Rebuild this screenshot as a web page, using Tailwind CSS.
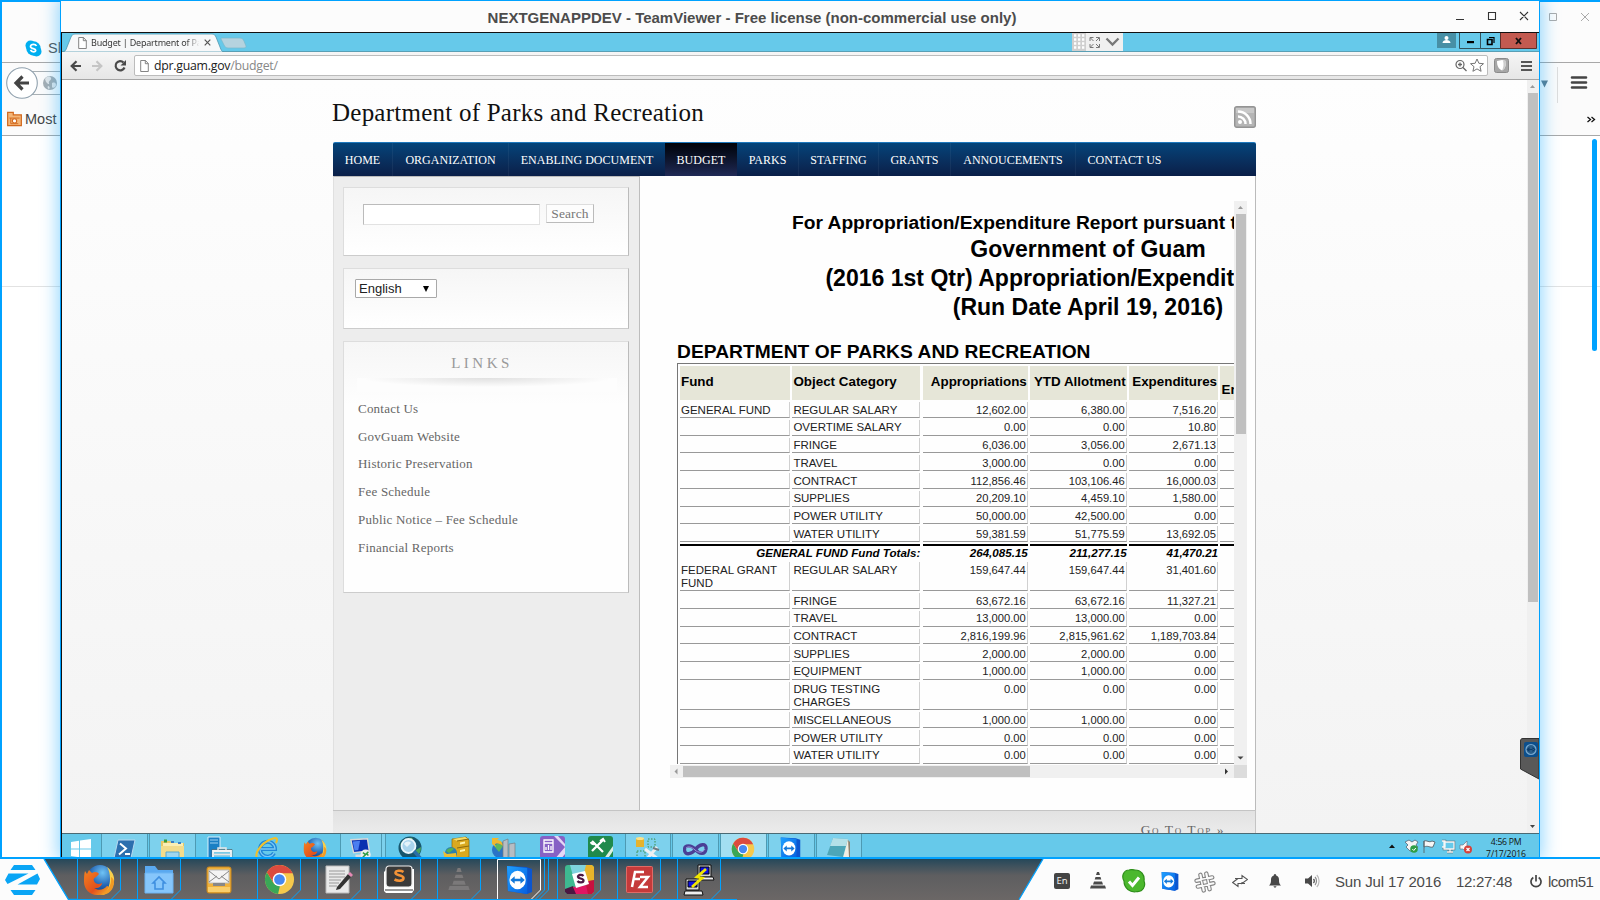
<!DOCTYPE html>
<html lang="en">
<head>
<meta charset="utf-8">
<title>Budget | Department of Parks and Recreation</title>
<script src="https://cdn.jsdelivr.net/npm/@tailwindcss/browser@4"></script>
</head>
<body class="w-[1600px] h-[900px] overflow-hidden font-['Liberation_Sans',sans-serif]">
<svg width="0" height="0" class="absolute">
  <defs>
    <linearGradient id="gBlue" x1="0" y1="0" x2="1" y2="1"><stop offset="0" stop-color="#1fa0ff"/><stop offset="1" stop-color="#0560e0"/></linearGradient>
    <radialGradient id="gGlobe" cx=".6" cy=".3" r=".8"><stop offset="0" stop-color="#6fc3f5"/><stop offset=".6" stop-color="#2667b5"/><stop offset="1" stop-color="#123a7c"/></radialGradient>
    <linearGradient id="gFox" x1="0" y1="0" x2="1" y2="1"><stop offset="0" stop-color="#f58220"/><stop offset=".6" stop-color="#e2501c"/><stop offset="1" stop-color="#f8b62b"/></linearGradient>
    <symbol id="firefox" viewBox="0 0 32 32">
      <circle cx="17" cy="14" r="13" fill="url(#gGlobe)"/>
      <path d="M24 3c5 4 8 9 7 15-1 7-6 12-12 13 6-5 8-10 8-16 0-5-1-9-3-12z" fill="#fbd04a"/>
      <path d="M2 7l2 3 2-4 3 3c3-2 6-1 7 1l-3 3c-2 1-3 2-2 4 1 3 5 4 8 2 0 3-4 6-8 5 4 3 10 2 13-2 2 0 2 2 1 3-3 5-7 6-11 6C7 31 1 25 1 18c0-4 0-8 1-11z" fill="url(#gFox)"/>
      <path d="M28 13c1 9-4 16-12 18 9 1 15-5 15-13 0-2-1-4-3-5z" fill="#f39a24"/>
    </symbol>
    <symbol id="chrome" viewBox="0 0 32 32">
      <circle cx="16" cy="16" r="15" fill="#f6c94c"/>
      <path d="M3 8.500L10 20l6.500 2.500L14.500 31A15 15 0 0 1 3 8.500z" fill="#3aa757"/>
      <path d="M3 8.500A15 15 0 0 1 29.500 9.500H16l-6 10z" fill="#dc4b3e"/>
      <circle cx="16" cy="16" r="7" fill="#fff"/><circle cx="16" cy="16" r="5.500" fill="#4688f1"/>
    </symbol>
    <symbol id="tv" viewBox="0 0 28 32">
      <path d="M1 2l20 1 6 2v24l-5 2L2 28z" fill="#0b55cf"/><path d="M1 2l21 2v27L2 28z" fill="url(#gBlue)"/>
      <ellipse cx="12" cy="16.500" rx="8.500" ry="9.500" fill="#fff"/>
      <path d="M4.500 16.500l4.500-4v2.700h6v-2.700l4.500 4-4.500 4v-2.700H9v2.700z" fill="#1277d8"/>
    </symbol>
    <symbol id="page" viewBox="0 0 9 12"><path d="M1 .5h4.500L8.300 3.500v8H.7V.5zM5.300.5v3.200h3" fill="#fff" stroke="#777" stroke-width=".9"/></symbol>
    <symbol id="cone" viewBox="0 0 16 18"><path d="M7 0h2l1 3H6zM5.500 5h5l.8 2.500H4.700zM4 9.500h8l1 3H3zM1 13.500h14l1 3H0z" fill="currentColor"/></symbol>
  </defs>
</svg>

<div class="relative w-[1600px] h-[900px] overflow-hidden bg-[#fcfcfc]">

  <!-- Browser window behind -->
  <div class="absolute inset-x-0 top-0 h-[857px] border-t-2 border-l-2 border-[#00a2ff] bg-white flex flex-col">
    <div class="h-[61px] shrink-0 bg-[#fcfcfc] border-b border-[#a8a8a8] flex items-start justify-between">
      <div class="flex items-center gap-1.5 pt-[38px] pl-[23px]">
        <svg class="size-[17px]" viewBox="0 0 17 17"><circle cx="5.500" cy="5.500" r="5" fill="#00aff0"/><circle cx="11.500" cy="11.500" r="5" fill="#00aff0"/><circle cx="8.500" cy="8.500" r="7.200" fill="#00aff0"/><path d="M11.500 6c-.6-1.300-1.700-1.700-3-1.700-1.800 0-3 .8-3 2.100 0 2.900 5.200 1.500 5.200 3.900 0 1-1 1.500-2.200 1.500-1.700 0-2.500-.7-3-1.900" fill="none" stroke="#fff" stroke-width="1.700"/></svg>
        <span class="text-[14.500px] leading-none text-[#555]">Slack</span>
      </div>
      <svg class="w-[60px] h-[40px]" viewBox="0 0 60 40" fill="none" stroke="#aaa" stroke-width="1"><path d="M9.500 11.500h7v7h-7zM41 11l8 8M49 11l-8 8"/></svg>
    </div>
    <div class="h-[73px] shrink-0 bg-[#fbfbfb] border-b border-[#a8a8a8] flex justify-between">
      <div>
        <svg class="w-[58px] h-[42px]" viewBox="0 0 58 42"><path d="M28 8.500h30M28 31.500h30" stroke="#a9b0b4"/><circle cx="20" cy="20" r="15.300" fill="#fff" stroke="#8fa0ad" stroke-width="1.100"/><path d="M27 20H15M20.500 13.500L14 20l6.500 6.500" fill="none" stroke="#444" stroke-width="3.200"/><circle cx="48" cy="20" r="7" fill="#a5adb2"/><path d="M43 16c2-3 5-3 6-1s-3 3-2 5-3 1-4-4zM50 20c3-1 4 0 4 2s-3 4-4 2zM46 23c2 0 2 3 1 3s-2-2-1-3z" fill="#e3e6e8"/></svg>
        <div class="flex items-center gap-[3px] pl-[5px] pt-1.5">
          <svg class="w-[15px] h-[16px]" viewBox="0 0 16 16"><path d="M.7 15V1h6v2.500h8.600V15z" fill="#f4b678" stroke="#d2691e" stroke-width="1.300"/><path d="M2.500 7h11M4 7v6h8" stroke="#d2691e" fill="none"/><circle cx="8" cy="10" r="2.300" fill="#fff" stroke="#d2691e" stroke-width="1.200"/></svg>
          <span class="text-[14.500px] leading-none text-[#444]">Most</span>
        </div>
      </div>
      <svg class="w-[60px] h-[73px]" viewBox="0 0 60 73"><path d="M1 17.500h7l-3.500 7z" fill="#5f7b8c"/><path d="M17.500 4v36" stroke="#ddd"/><path d="M32 14.500h14M32 19.500h14M32 24.500h14" stroke="#444" stroke-width="2.600" stroke-linecap="round"/><path d="M47.500 54l3 2.500-3 2.500M51.500 54l3 2.500-3 2.500" fill="none" stroke="#111" stroke-width="1.300"/></svg>
    </div>
    <div class="h-[151px] shrink-0 border-b border-[#e2e2e2] flex justify-end items-start pt-[3px] pr-[3px]">
      <div class="w-[5px] h-[212px] rounded-sm bg-[#00a2ff]"></div>
    </div>
  </div>

  <!-- Remote-session window -->
  <div class="absolute left-[60px] top-0 w-[1480px] h-[857px] border-x border-t border-[#00a2ff] bg-white flex flex-col shadow-[0_0_16px_3px_rgba(0,162,255,0.4)]">
    <div class="h-[31px] shrink-0 bg-[#fcfcfc] relative flex items-center justify-center">
      <span class="text-[15px] font-bold text-[#4c4c4c] whitespace-nowrap leading-none pr-[96px] pt-[2px]">NEXTGENAPPDEV - TeamViewer - Free license (non-commercial use only)</span>
      <svg class="absolute right-0 top-0 w-[100px] h-[31px]" viewBox="0 0 100 31" fill="none" stroke="#333" stroke-width="1.100"><path d="M17 18.500h8M49.500 11.500h7v7h-7zM81 11l8 8M89 11l-8 8"/></svg>
    </div>

    <div class="flex-1 min-h-0 border-t border-l border-[#111] flex flex-col">
      <!-- Tab strip -->
      <div class="h-[19px] shrink-0 bg-[#66c9ea] border-b border-[#5a9fb5] flex items-start justify-between">
        <div class="relative h-[19px] w-[200px] flex items-center">
          <svg class="absolute left-0 top-0 w-[200px] h-[19px]" viewBox="0 0 200 19"><path d="M0 19c3 0 4-2 5-5L9 4c1-2 2-3 4-3h137c2 0 3 1 4 3l4 10c1 3 2 5 4 5z" fill="#f7f8f9" stroke="#4f98b0" stroke-width=".8"/><path d="M160 5h18c2 0 3 1 4 3l2 5c0 1 0 2-2 2h-16c-2 0-3-1-4-3l-3-6c0-1 0-1 1-1z" fill="#b5d3df" stroke="#78b7cc" stroke-width=".7"/></svg>
          <svg class="relative ml-[16px] w-[9px] h-[12px]"><use href="#page"/></svg>
          <span class="relative ml-[4px] w-[108px] overflow-hidden whitespace-nowrap font-['Noto_Sans',sans-serif] text-[9px] tracking-[-0.200px] leading-[14px] bg-linear-to-r from-[#333] from-88% to-[#eee] to-100% bg-clip-text text-transparent">Budget | Department of Parks</span>
          <svg class="relative ml-[5px] size-[7px]" viewBox="0 0 7 7"><path d="M.7.700l5.600 5.600M6.300.700L.7 6.300" stroke="#555" stroke-width="1.200"/></svg>
        </div>
        <div class="flex items-start">
          <div class="flex h-[18px] mr-[315px]">
            <svg class="w-[51px] h-[18px]" viewBox="0 0 51 18"><path d="M0 0h51v18H0z" fill="#f0f0f0"/><path d="M0 0h14v18H0z" fill="#cfcfcf"/><g stroke="#fff" stroke-width="2.300" stroke-dasharray="2.300 1.700"><path d="M2 2.500h12M2 6.500h12M2 10.500h12M2 14.500h12"/></g><path d="M18 8V4.500h3.500M24 4.500h3.500V8M27.500 11v3.500H24M21.500 14.500H18V11M18.500 5l3 3M27 5l-3 3M27 14l-3-3M18.500 14l3-3" fill="none" stroke="#777" stroke-width="1"/><path d="M34.500 5.500l6 6 6-6" fill="none" stroke="#777" stroke-width="2.300"/></svg>
          </div>
          <svg class="w-[101px] h-[17px] -ml-px mr-px" viewBox="0 0 101 17"><path d="M0 0h19v15H0z" fill="#478fa5"/><circle cx="9.500" cy="5" r="2" fill="#fff"/><path d="M5.500 10c0-4 8-4 8 0z" fill="#fff"/><path d="M22.500-.5h21v16h-21zM43.500-.5h20v16h-20z" fill="#66c9ea" stroke="#33525c"/><path d="M63.500-.5h36v16h-36z" fill="#c35a50" stroke="#5c302c"/><path d="M30 8h7v2.200h-7z" fill="#000"/><path d="M50.500 6.500h4.500v5h-4.500z" fill="none" stroke="#000" stroke-width="1.600"/><path d="M52 4.500h5v5.500" fill="none" stroke="#000" stroke-width="1.200"/><path d="M79 5l5 6M84 5l-5 6" stroke="#111" stroke-width="1.900"/></svg>
        </div>
      </div>
      <!-- Toolbar -->
      <div class="h-[28px] shrink-0 bg-linear-to-b from-[#f6f6f6] to-[#e6e6e6] border-b border-[#a5a5a5] flex items-center pl-[7px] pr-[6px]">
        <svg class="w-[60px] h-[16px]" viewBox="0 0 60 16" fill="none"><path d="M12 8H3M7.500 3.300L2.700 8l4.800 4.700" stroke="#4a4a4a" stroke-width="2.200"/><path d="M23 8h9M27.500 3.300L32.300 8l-4.800 4.700" stroke="#c5c5c5" stroke-width="2.200"/><path d="M54.500 4.500A4.600 4.600 0 1 0 55.500 9.500" stroke="#4a4a4a" stroke-width="2.200"/><path d="M57 2v5.500h-5.500z" fill="#4a4a4a"/></svg>
        <div class="ml-[5px] w-[1354px] h-[21px] rounded-[2px] bg-white border border-[#bcbcbc] flex items-center pl-[5px] pr-[2px]">
          <svg class="w-[9px] h-[12px]"><use href="#page"/></svg>
          <span class="ml-[5px] flex-1 font-['Open_Sans',sans-serif] text-[12.300px] leading-[18px] tracking-[-0.250px] text-[#222]">dpr.guam.gov<span class="text-[#888]">/budget/</span></span>
          <svg class="w-[30px] h-[15px]" viewBox="0 0 30 15" fill="none" stroke="#666"><circle cx="5" cy="6.500" r="4" stroke-width="1.200"/><path d="M3 6.500h4M5 4.500v4M8 9.500l3.500 3.500" stroke-width="1.300"/><path d="M22 1l1.900 4.300 4.600.4-3.500 3 1.100 4.600L22 10.900l-4.100 2.400L19 8.700l-3.500-3 4.600-.4z" stroke-width=".9"/></svg>
        </div>
        <svg class="ml-[6px] w-[15px] h-[15px]" viewBox="0 0 15 15"><rect x=".5" y=".5" width="14" height="14" rx="2" fill="#a6a6a6" stroke="#8a8a8a"/><path d="M3 3l5-1 4 1c0 5-1 8-4 9.500C4.500 11 3 8 3 3z" fill="#fff"/><path d="M9 2.500l3 .5c0 5-1 8-4 9.500 1.500-3 2-6 1-10z" fill="#ccc"/></svg>
        <svg class="ml-[12px] w-[11px] h-[12px]" viewBox="0 0 11 12"><path d="M0 2h11M0 6h11M0 10h11" stroke="#555" stroke-width="2"/></svg>
      </div>

      <!-- Page -->
      <div class="h-[753px] shrink-0 flex overflow-hidden">
        <div class="w-[1465px] bg-linear-to-b from-[#fefefe] to-[#f3f3f3] pl-[271px]">
          <div class="w-[923px]">
            <header class="h-[62px] flex justify-between">
              <h1 class="pt-[18px] -ml-px font-['Liberation_Serif',serif] text-[25px] leading-[30px] tracking-[0.240px] text-[#111] whitespace-nowrap">Department of Parks and Recreation</h1>
              <svg class="mt-[26px] w-[22px] h-[22px]" viewBox="0 0 22 22"><rect x=".7" y=".7" width="20.600" height="20.600" rx="2" fill="#b5b5b5" stroke="#949494" stroke-width="1.400"/><path d="M2 2h18v5H2z" fill="#c8c8c8"/><circle cx="6" cy="16" r="2" fill="#fff"/><path d="M4 10.500a7.500 7.500 0 0 1 7.500 7.500M4 5.500A12.500 12.500 0 0 1 16.500 18" fill="none" stroke="#fff" stroke-width="2.500"/></svg>
            </header>
            <nav class="h-[34px] flex rounded-t-[2px] border-t border-[#1d78bd] bg-linear-to-b from-[#03447a] to-[#0a1f48] font-['Liberation_Serif',serif] text-[12px] leading-[35px] tracking-[0.020px] text-white text-center whitespace-nowrap">
              <a class="w-[60px] border-r border-white/5">HOME</a>
              <a class="w-[116px] border-r border-white/5">ORGANIZATION</a>
              <a class="w-[156px]">ENABLING DOCUMENT</a>
              <a class="w-[72px] bg-linear-to-b from-[#02040a] to-[#202a56]">BUDGET</a>
              <a class="w-[62px] border-r border-white/5">PARKS</a>
              <a class="w-[80px] border-r border-white/5">STAFFING</a>
              <a class="w-[72px] border-r border-white/5">GRANTS</a>
              <a class="w-[125px] border-r border-white/5">ANNOUCEMENTS</a>
              <a class="w-[97px]">CONTACT US</a>
            </nav>
            <div class="h-[634px] flex border-r border-[#bbb] bg-[#fefefe]">
              <aside class="w-[307px] bg-[#ededed] border-l border-r border-t border-l-[#e0e0e0] border-r-[#bdbdbd] border-t-[#bbb] pl-[9px] pt-[10px] flex flex-col font-['Liberation_Serif',serif]">
                <div class="w-[286px] h-[69px] border border-[#ddd] border-r-[#bbb] border-b-[#ccc] bg-linear-to-b from-[#f6f6f6] to-white flex items-start pl-[19px] pt-[16px]">
                  <div class="w-[177px] h-[21px] bg-white border border-[#e2e2e2] border-t-[#bbb] border-l-[#bbb]"></div>
                  <div class="ml-[6px] w-[48px] h-[19px] bg-[#fdfdfd] border border-[#ddd] border-r-[#bbb] border-b-[#bbb] text-center text-[13.500px] tracking-[0.100px] leading-[18px] text-[#777]">Search</div>
                </div>
                <div class="mt-[12px] w-[286px] h-[61px] border border-[#ddd] border-r-[#bbb] border-b-[#ccc] bg-linear-to-b from-[#f6f6f6] to-white pl-[11px] pt-[10px]">
                  <div class="w-[82px] h-[19px] bg-white border border-[#a9a9a9] rounded-[1px] flex items-center justify-between pl-[3px] pr-[7px] font-['Liberation_Sans',sans-serif] text-[13px] text-[#222]"><span class="leading-none -mt-px">English</span><svg class="w-[6px] h-[6px]" viewBox="0 0 6 6"><path d="M0 0h6L3 6z" fill="#000"/></svg></div>
                </div>
                <div class="mt-[12px] w-[286px] h-[252px] border border-[#ddd] border-r-[#bbb] border-b-[#ccc] bg-linear-to-b from-[#f6f6f6] to-[#fefefe] to-25%">
                  <div class="h-[36px] pt-[11px] pr-[8px] text-center text-[15px] leading-[20px] tracking-[3.500px] text-[#999]">LINKS</div>
                  <svg class="ml-[13px] w-[260px] h-[14px]" viewBox="0 0 260 14"><defs><radialGradient id="hr" gradientUnits="userSpaceOnUse" cx="0" cy="0" r="1" gradientTransform="translate(130 0) scale(125 9)"><stop offset="0" stop-color="#e0e0e0"/><stop offset="1" stop-color="#fdfdfd"/></radialGradient></defs><path d="M0 0h260v14H0z" fill="url(#hr)"/></svg>
                  <div class="pl-[14px] pt-[3px] text-[13px] leading-[27.700px] tracking-[0.220px] text-[#666]">
                    <div>Contact Us</div><div>GovGuam Website</div><div>Historic Preservation</div><div>Fee Schedule</div><div>Public Notice – Fee Schedule</div><div>Financial Reports</div>
                  </div>
                </div>
              </aside>
              <main class="pl-[30px] pt-[25px]">
                <div class="w-[577px] h-[577px]">
                  <div class="flex h-[564px]">
                    <div class="w-[564px] h-[564px] overflow-hidden text-black">
                      <div class="w-[836px] pt-[9px] text-center font-bold whitespace-nowrap">
                        <div class="text-[19.200px] leading-[25px] text-left pl-[122px]">For Appropriation/Expenditure Report pursuant to P.L. 33-66</div>
                        <div class="text-[23.040px] leading-[29px]">Government of Guam</div>
                        <div class="text-[23.040px] leading-[29px]">(2016 1st Qtr) Appropriation/Expenditure Report</div>
                        <div class="text-[23.040px] leading-[29px]">(Run Date April 19, 2016)</div>
                        <div class="mt-[18px] text-left pl-[7px] text-[19.200px] tracking-[0.050px] leading-[23px]">DEPARTMENT OF PARKS AND RECREATION</div>
                      </div>
                      <div id="budget" class="ml-[7px] w-[640px] border-t border-l border-[#777] pl-[2px] pt-[2px]"></div>
                    </div>
                    <div class="w-[13px] h-[564px] bg-[#f0f0f0] flex flex-col items-center">
                      <svg class="w-[13px] h-[13px] shrink-0" viewBox="0 0 13 13"><path d="M4 8l2.500-3L9 8z" fill="#999"/></svg>
                      <div class="w-[10px] h-[220px] bg-[#c0c0c0] mb-auto"></div>
                      <svg class="w-[13px] h-[13px] shrink-0" viewBox="0 0 13 13"><path d="M3.500 4.500l3 3 3-3z" fill="#444"/></svg>
                    </div>
                  </div>
                  <div class="h-[13px] bg-[#f0f0f0] flex items-center">
                    <svg class="w-[13px] h-[13px]" viewBox="0 0 13 13"><path d="M7.500 3.500v6l-3-3z" fill="#999"/></svg>
                    <div class="w-[347px] h-[11px] bg-[#c0c0c0] mr-auto"></div>
                    <svg class="w-[13px] h-[13px]" viewBox="0 0 13 13"><path d="M4 3.500v6l3-3z" fill="#333"/></svg>
                    <div class="size-[13px] bg-[#dcdcdc]"></div>
                  </div>
                </div>
              </main>
            </div>
            <footer class="h-[23px] overflow-hidden border-t border-r border-[#c4c4c4] bg-linear-to-b from-[#e2e2e2] to-[#ebebeb] flex justify-end pr-[30px] pt-[9px]">
              <span class="font-['Liberation_Serif',serif] text-[13.500px] leading-[20px] tracking-[1.550px] text-[#666] [font-variant:small-caps] whitespace-nowrap">Go To Top »</span>
            </footer>
          </div>
        </div>
        <div class="w-[12px] bg-[#f0f0f0] flex flex-col items-center">
          <svg class="w-[12px] h-[13px] shrink-0" viewBox="0 0 12 13"><path d="M3 8l2.500-3L8 8z" fill="#999"/></svg>
          <div class="w-[10px] h-[509px] bg-[#c0c0c0] mb-auto"></div>
          <svg class="w-[12px] h-[13px] shrink-0" viewBox="0 0 12 13"><path d="M3 5h5L5.500 8z" fill="#444"/></svg>
        </div>
      </div>

      <!-- Remote taskbar -->
      <div class="h-[24px] shrink-0 overflow-hidden border-t border-[#4a6a74] bg-[#66c9ea] flex justify-between">
        <div class="flex h-[23px] overflow-hidden">
          <div class="w-[39px] pl-[8px] pt-[4px]"><svg class="w-[22px] h-[22px]" viewBox="0 0 22 22" fill="#fff"><path d="M1 4l8-1.200V10.500H1zM10 2.600L21 1v9.500H10zM1 11.500h8v7.700L1 18zM10 11.500h11V21l-11-1.600z"/></svg></div>
          <div class="w-[47px] border-x border-[#4d9ab3] bg-[#7dd1ed] pl-[11px] pt-[5px]"><svg class="w-[23px] h-[22px]" viewBox="0 0 23 22"><path d="M5 1h17l-4 18H1z" fill="#2c6fae" stroke="#b7d8ef"/><path d="M7 4.500l6 5-7 6M12 15h5" fill="none" stroke="#fff" stroke-width="2"/></svg></div>
          <div class="ml-[1px] w-[47px] border-x border-[#4d9ab3] bg-[#7dd1ed] pl-[10px] pt-[4px]"><svg class="w-[25px] h-[22px]" viewBox="0 0 25 22"><path d="M1 3h9l2 2h12v17H1z" fill="#e9c765"/><path d="M3 5h20v4H3z" fill="#fbeeb5"/><path d="M4 1.500h3v3H4z" fill="#3a9a3a"/><path d="M11 3h3v2h-3zM18 4h3v2h-3z" fill="#3b7fc4"/><path d="M1 8h23v14H1z" fill="#f3dc8c"/><path d="M6 14h13v8H6z" fill="#9ed7ef" stroke="#58a8cf"/></svg></div>
          <div class="w-[46px] pl-[11px] pt-[2px]"><svg class="w-[26px] h-[24px]" viewBox="0 0 26 24"><path d="M1 1h12v22H1z" fill="#1b7fc4" stroke="#d7eefa"/><path d="M3 4h8M3 7h8" stroke="#9ed2f2"/><path d="M5 13.500h20V24H5z" fill="#66c9ea" stroke="#555" stroke-width=".6"/><path d="M6 15h18v9H6z" fill="#7cc9e4" stroke="#f4f4f4" stroke-width="1.800"/><path d="M11 14v-2h8v2M6 18.500h18" fill="none" stroke="#e6e6e6" stroke-width="1.500"/></svg></div>
          <div class="w-[48px] pl-[13px] pt-[2px]"><svg class="w-[24px] h-[24px]" viewBox="0 0 24 24"><path d="M19 17a7.500 7.500 0 1 1 1-4H6" fill="none" stroke="#2188d8" stroke-width="4"/><path d="M19 17a7.500 7.500 0 1 1 1-4H6" fill="none" stroke="#7cc8f5" stroke-width="1.300"/><path d="M2 22C-1 16 9 4 20 2c3 0 2 3 1 5" fill="none" stroke="#f0c02b" stroke-width="2"/></svg></div>
          <div class="w-[50px] pl-[13px] pt-[3px]"><svg class="w-[24px] h-[24px]"><use href="#firefox"/></svg></div>
          <div class="w-[42px] border-x border-[#4d9ab3] bg-[#7dd1ed] pl-[8px] pt-[3px]"><svg class="w-[24px] h-[24px]" viewBox="0 0 26 24"><path d="M2 2l18-1 2 13-17 2z" fill="#0a2fb0" stroke="#d8d8d8" stroke-width="1.500"/><path d="M4 4l8-1-2 10-4 .5z" fill="#4b7ef0"/><path d="M7 18h8v4H7z" fill="#ddd"/><circle cx="18" cy="18" r="5.500" fill="#eee"/><path d="M15 16l3 2-3 3M21 15l-2 2 2 2" fill="none" stroke="#2f9b45" stroke-width="1.600"/></svg></div>
          <div class="w-[4px] border-r border-[#4d9ab3] bg-[#7dd1ed]"></div>
          <div class="w-[47px] pl-[11px] pt-[2px]"><svg class="w-[26px] h-[24px]" viewBox="0 0 26 24"><circle cx="13" cy="12" r="11.500" fill="#17566e"/><path d="M3 9c3-6 9-8 13-7l-6 7zM19 14l5-3c0 5-2 8-5 9z" fill="#4aa35b"/><circle cx="11.500" cy="10" r="7" fill="#a9d4ec" stroke="#eaf6fc" stroke-width="1.800"/><path d="M7 8c2-3 5-3 7-1l-4 4z" fill="#e4f3fa"/><path d="M17 15l7 8" stroke="#2b6ea8" stroke-width="3.500"/></svg></div>
          <div class="w-[48px] pl-[10px] pt-[2px]"><svg class="w-[27px] h-[24px]" viewBox="0 0 27 24"><path d="M9 3l14-2 3 3v17l-12 3-5-3z" fill="#d9a920" stroke="#8d6a0c" stroke-width=".7"/><path d="M10 3l12-2 3 2-11 2z" fill="#f7dc66"/><path d="M14 5l12-2M14 12l12-2" stroke="#8d6a0c"/><path d="M17 6.500l5-1v2l-5 1zM17 14l5-1v2l-5 1z" fill="#fff3a8"/><circle cx="8" cy="17" r="6" fill="#2b7fae"/><path d="M3 15c3-4 7-3 8-2l-5 4z" fill="#4fb15a"/><path d="M0 15l4 3 9-1v7H2z" fill="#e9bf35"/></svg></div>
          <div class="w-[48px] pl-[10px] pt-[2px]"><svg class="w-[26px] h-[24px]" viewBox="0 0 26 24"><circle cx="9" cy="14" r="8" fill="#2a74c7"/><path d="M3 10c4-4 8-2 9 0l-4 6z" fill="#5bb85f"/><path d="M1 2h7l-2 2c4 0 6 3 6 6-2-2-5-3-8-2l1 3-4-3z" fill="#f1b82d"/><path d="M12 5l5-2v20h-5zM18 8l6-1v17h-6z" fill="#b7bdc3" stroke="#737b83" stroke-width=".7"/></svg></div>
          <div class="w-[48px] pl-[11px] pt-[2px]"><svg class="w-[25px] h-[24px]" viewBox="0 0 25 24"><rect width="25" height="24" rx="3" fill="#8661c5"/><path d="M14 0l11 11-11 13h6L25 18V8L18 0z" fill="#e4d8f5"/><path d="M4 4h9v12H4zM4 7h9M6 14v-3M8.500 14V9M11 14v-4" fill="none" stroke="#fff" stroke-width="1.300"/></svg></div>
          <div class="w-[48px] pl-[11px] pt-[2px]"><svg class="w-[25px] h-[24px]" viewBox="0 0 25 24"><rect width="25" height="24" rx="3" fill="#1f8a4c"/><path d="M15 24L25 10v5l-6 9z" fill="#dcefe2"/><path d="M4 5l11 11M15 4L4 15" stroke="#fff" stroke-width="2.300"/><path d="M3 6c0 2 3 3 4 1M12 5l3-2 2 3" fill="none" stroke="#fff" stroke-width="2"/></svg></div>
          <div class="w-[46px] border-x border-[#4d9ab3] bg-[#7dd1ed] pl-[9px] pt-[2px]"><svg class="w-[26px] h-[24px]" viewBox="0 0 26 24"><path d="M1 2h8v9H1z" fill="#e6b32e"/><ellipse cx="5" cy="2.500" rx="4" ry="1.500" fill="#fae28a"/><path d="M13 3h7v8h-7zM2 15h8v8H2z" fill="none" stroke="#3f8d4a" stroke-dasharray="1.500 1.500"/><path d="M10 13l13 10M22 11l-10 12" stroke="#eef0f2" stroke-width="3"/><path d="M18 12l6 2" stroke="#707a82" stroke-width="2"/></svg></div>
          <div class="ml-[1px] w-[47px] border-x border-[#4d9ab3] bg-[#7dd1ed] pl-[10px] pt-[7px]"><svg class="w-[25px] h-[16px]" viewBox="0 0 25 16"><path d="M12.500 8.500C9 13 2 15 1.500 9S9 4 12.500 8.500 22 14.500 23 8 16 3 12.500 8.500z" fill="none" stroke="#4a3f96" stroke-width="3.300"/><path d="M3 7c2-2 6-1 9 2s8 3 10-1" fill="none" stroke="#9c93da" stroke-width="1"/></svg></div>
          <div class="ml-[1px] w-[47px] border-x border-[#4d9ab3] bg-[#a3dff2] pl-[10px] pt-[3px]"><svg class="w-[24px] h-[24px]"><use href="#chrome"/></svg></div>
          <div class="ml-[1px] w-[47px] border-x border-[#4d9ab3] bg-[#7dd1ed] pl-[11px] pt-[2px]"><svg class="w-[21px] h-[24px]"><use href="#tv"/></svg></div>
          <div class="ml-[1px] w-[46px] border-x border-[#4d9ab3] bg-[#7dd1ed] pl-[10px] pt-[3px]"><svg class="w-[24px] h-[22px]" viewBox="0 0 24 22"><path d="M20 2l3 3v17h-4z" fill="#8b8271"/><path d="M6 1l15 1-5 18-16-2z" fill="#4da6b8"/><path d="M6 1l15 1-2 7L3 9z" fill="#b4e0e8"/><path d="M21 2l1 18-6 1z" fill="#f2eee3"/></svg></div>
        </div>
        <div class="flex pr-[12px] overflow-hidden">
          <svg class="w-[94px] h-[23px]" viewBox="0 0 94 23"><path d="M0 14l3-3.500L6 14z" fill="#111"/><path d="M16 8l4-2 3 2 3-2 3 2-2 3 2 2-4 4h-4l-4-4 2-2z" fill="#f5f5f5" stroke="#567" stroke-width=".8"/><circle cx="25" cy="15" r="3.800" fill="#2e9e45"/><path d="M23.300 15l1.500 1.500 2-2.500" stroke="#fff" fill="none"/><path d="M35 7v12M35 7c3-1 5 2 8 0l3 1-2 5c-3 1-5-2-9 0z" fill="#f7f7f7" stroke="#55636a" stroke-width=".9"/><path d="M55 8h10v7H55zM58 18h6M61 15v3M53 7h3v6h-3" fill="#66c9ea" stroke="#55636a" stroke-width="2.400"/><path d="M55 8h10v7H55zM58 18h6M61 15v3M53 7h3v6h-3" fill="#66c9ea" stroke="#f7f7f7" stroke-width="1.300"/><path d="M71 11h3l4-4v12l-4-4h-3z" fill="#f7f7f7" stroke="#667" stroke-width=".6"/><circle cx="79" cy="15.500" r="4" fill="#d8403a"/><path d="M77.500 14l3 3M80.500 14l-3 3" stroke="#fff" stroke-width="1.200"/></svg>
          <div class="ml-[2px] w-[42px] text-center font-['Open_Sans',sans-serif] text-[8.700px] leading-[13px] tracking-[-0.300px] pt-[2px] text-[#111] whitespace-nowrap"><div>4:56 PM</div><div class="-mt-px tracking-[-0.150px]">7/17/2016</div></div>
        </div>
      </div>
    </div>
    <!-- Session panel handle -->
    <svg class="absolute right-0 top-[737px] w-[19px] h-[42px]" viewBox="0 0 19 42"><path d="M19 .5H3C1 .5.500 1.500.500 3v28L19 41z" fill="#595959" stroke="#333"/><rect x="4" y="4" width="14" height="15" rx="2" fill="#0d4f8c"/><circle cx="11" cy="11.500" r="5" fill="#2a5f8c" stroke="#79a9cf" stroke-width="1.200"/><path d="M6.500 11.500l3-2.500v5zM15.500 11.500l-3-2.500v5zM8 11h6v1H8z" fill="#0d3c6b"/></svg>
  </div>

  <!-- Desktop dock -->
  <div class="absolute left-0 top-[857px] w-[1600px] h-[43px] border-t-2 border-[#00a2ff] bg-linear-to-b from-[#24485a] via-[#5e5e60] via-40% to-[#6b6766] overflow-hidden flex justify-between">
    <div class="flex h-[41px]">
      <svg class="w-[77px] h-[41px]" viewBox="0 0 77 41"><path d="M0 0h44l24.500 41H0z" fill="#fcfcfc"/><path d="M44 0l24.500 40.500H77" fill="none" stroke="#00a2ff" stroke-width="1.400"/><path d="M14 6h18l3.500 5H10.500zM14 36h18l3.500-5H10.500zM8.500 14.500h20L7.500 25 5 21zM37.500 14.500L40 20l-3 5.500H17.500z" fill="#0aa5f5"/></svg>
      <div id="dock" class="flex"></div>
    </div>
    <div class="relative flex h-[41px] w-[582px] items-center text-[#4a4a4a]">
      <svg class="absolute left-0 top-0 w-[582px] h-[41px]" viewBox="0 0 582 41"><path d="M25 0h557v41H1z" fill="#fcfcfc"/><path d="M25 0L1 40.500" stroke="#00a2ff" stroke-width="1.300"/></svg>
      <span class="relative mt-[3px] ml-[36px] w-[16px] h-[16px] rounded-[2px] bg-[#444] text-[#eee] font-['Noto_Sans',sans-serif] text-[9.500px] leading-[16px] text-center">En</span>
      <svg class="relative mt-[3px] ml-[20px] w-[16px] h-[18px]"><use href="#cone"/></svg>
      <svg class="relative mt-[3px] ml-[16px] w-[24px] h-[24px]" viewBox="0 0 24 24"><path d="M7 1c3-1 5 0 6 0 6 0 10 5 9 11 2 5-1 11-7 10.500C8 24 2 19 2 12-1 7 2 1 7 1z" fill="#4cb82e" stroke="#2f8f1a" stroke-width="1.200"/><path d="M7 12.500l3.500 4 6.500-8" fill="none" stroke="#fff" stroke-width="3"/></svg>
      <svg class="relative mt-[3px] ml-[15px] w-[18px] h-[22px]"><use href="#tv"/></svg>
      <svg class="relative mt-[4px] ml-[15px] w-[22px] h-[22px]" viewBox="0 0 22 22" fill="none"><g transform="rotate(-12 11 11)" stroke-linecap="round"><path d="M8 3v16M14 3v16M3 8h16M3 14h16" stroke="#858585" stroke-width="4.400"/><path d="M8 3v16M14 3v16M3 8h16M3 14h16" stroke="#fafafa" stroke-width="2.200"/><rect x="9" y="9" width="4" height="4" fill="#fafafa" stroke="#858585"/></g></svg>
      <svg class="relative mt-[2px] ml-[16px] w-[16px] h-[14px]" viewBox="0 0 16 14" fill="none" stroke="#555" stroke-width="1.100"><path d="M3 4.500h7V1.500l5.500 4-5.500 4V8M13 9.500H6v3L.7 8.500 6 4.500"/></svg>
      <svg class="relative mt-[3px] ml-[21px] w-[12px] h-[14px]" viewBox="0 0 12 14"><path d="M6 0c1 0 1.200 1 1.200 1.500C9.500 2 10 4 10 6c0 3 .5 4 2 5.500H0C1.500 10 2 9 2 6c0-2 .5-4 2.800-4.500C4.800 1 5 0 6 0zM4.500 12.300h3c-.3 1.800-2.700 1.800-3 0z" fill="#484848"/></svg>
      <svg class="relative mt-[3px] ml-[24px] w-[15px] h-[14px]" viewBox="0 0 15 14" fill="none"><path d="M0 4.500h3L7 1v12L3 9.500H0z" fill="#484848"/><path d="M8.500 5c1 1 1 3 0 4" stroke="#484848" stroke-width="1.300"/><path d="M10 3c2 2 2 6 0 8" stroke="#888" stroke-width="1.200"/><path d="M11.800 1c3 3 3 9 0 12" stroke="#bbb" stroke-width="1.200"/></svg>
      <span class="relative mt-[4px] ml-[15px] w-[106px] text-[15px] tracking-[-0.150px] leading-none whitespace-nowrap">Sun Jul 17 2016</span>
      <span class="relative mt-[4px] ml-[15px] w-[57px] text-[15px] tracking-[-0.300px] leading-none">12:27:48</span>
      <svg class="relative mt-[3px] ml-[17px] w-[12px] h-[13px]" viewBox="0 0 12 13" fill="none" stroke="#444" stroke-width="1.700"><path d="M3.300 2.500a5 5 0 1 0 5.400 0M6 0v6.500"/></svg>
      <span class="relative mt-[4px] ml-[6px] text-[15px] tracking-[-0.500px] leading-none">lcom51</span>
    </div>
  </div>
</div>

<script>
const rows = [
  ["GENERAL FUND","REGULAR SALARY","12,602.00","6,380.00","7,516.20"],
  ["","OVERTIME SALARY","0.00","0.00","10.80"],
  ["","FRINGE","6,036.00","3,056.00","2,671.13"],
  ["","TRAVEL","3,000.00","0.00","0.00"],
  ["","CONTRACT","112,856.46","103,106.46","16,000.03"],
  ["","SUPPLIES","20,209.10","4,459.10","1,580.00"],
  ["","POWER UTILITY","50,000.00","42,500.00","0.00"],
  ["","WATER UTILITY","59,381.59","51,775.59","13,692.05"],
  ["total","GENERAL FUND Fund Totals:","264,085.15","211,277.15","41,470.21"],
  ["FEDERAL GRANT FUND","REGULAR SALARY","159,647.44","159,647.44","31,401.60"],
  ["","FRINGE","63,672.16","63,672.16","11,327.21"],
  ["","TRAVEL","13,000.00","13,000.00","0.00"],
  ["","CONTRACT","2,816,199.96","2,815,961.62","1,189,703.84"],
  ["","SUPPLIES","2,000.00","2,000.00","0.00"],
  ["","EQUIPMENT","1,000.00","1,000.00","0.00"],
  ["","DRUG TESTING CHARGES","0.00","0.00","0.00"],
  ["","MISCELLANEOUS","1,000.00","1,000.00","0.00"],
  ["","POWER UTILITY","0.00","0.00","0.00"],
  ["","WATER UTILITY","0.00","0.00","0.00"]
];
const grid = "grid grid-cols-[110px_128px_105px_96.5px_89px_90px] gap-x-[2.4px]";
const head = ["Fund","Object Category","Appropriations","YTD Allotment","Expenditures"];
let html = `<div class="${grid} h-[34.300px] text-[13.400px] font-bold leading-[32px] whitespace-nowrap">` +
  head.map((h,i)=>`<div class="bg-[#e6e6d8] px-[1px] h-[34px] ${i>1?"flex justify-end":""}">${h}</div>`).join("") +
  `<div class="bg-[#e6e6d8] pl-[1px] pt-[16px] h-[34px] leading-[16px]">Encumbrances</div></div>`;
for (const r of rows) {
  if (r[0] === "total") {
    html += `<div class="h-[18.400px] pt-[2px] grid grid-cols-[240.4px_105px_96.5px_89px_90px] gap-x-[2.4px] text-[11.600px] font-bold italic leading-[13px] text-right whitespace-nowrap">` +
      [r[1],r[2],r[3],r[4],""].map(c=>`<div class="border-t-2 border-black">${c}</div>`).join("") + `</div>`;
    continue;
  }
  const tall = r[0].startsWith("FEDERAL") || r[1].startsWith("DRUG");
  html += `<div class="${grid} ${tall?"h-[30.700px]":"h-[17.730px]"} pt-[2px] leading-[13px] text-[#222]">` +
    [...r,""].map((c,i)=>`<div class="border-b border-r border-b-[#999] border-r-[#d0d0d0] pt-[1.400px] px-[1px] ${i>1?"text-right text-[11.200px]":"text-[11.500px]"}">${c}</div>`).join("") + `</div>`;
}
document.getElementById("budget").innerHTML = html;

const apps = [
  ["line", `<svg class="w-[32px] h-[32px]"><use href="#firefox"/></svg>`],
  ["line", `<svg class="w-[30px] h-[29px]" viewBox="0 0 30 29"><path d="M1 1h10l3 4h15v23H1z" fill="#5aa9f0"/><path d="M1 8h28v20H1z" fill="#86c6fb" stroke="#6db4f3"/><path d="M9 18l6-6 6 6h-2v6h-8v-6z" fill="none" stroke="#3f8fe0" stroke-width="1.600"/></svg>`],
  ["", `<svg class="w-[26px] h-[28px]" viewBox="0 0 26 28"><rect x="1" y="1" width="24" height="26" rx="2" fill="#f0b23c" stroke="#c9861c"/><path d="M3 4h20v13H3z" fill="#f4f4f4" stroke="#bbb"/><path d="M3 5l10 8 10-8M3 16l8-6M23 16l-8-6" fill="none" stroke="#888"/><path d="M7 17h12v3H7z" fill="#888"/><path d="M2 21h22v5H2z" fill="#f9ce6b"/></svg>`],
  ["line", `<svg class="w-[31px] h-[31px]"><use href="#chrome"/></svg>`],
  ["line", `<svg class="w-[28px] h-[29px]" viewBox="0 0 28 29"><path d="M1 1h23v27H1z" fill="#e9e9e9" stroke="#bbb"/><path d="M4 6h16M4 9h16M4 12h16M4 15h12M4 18h10M4 21h8" stroke="#999"/><path d="M12 22l11-13 3 3-11 12-4 1z" fill="#333"/><path d="M23 9l2-2 3 3-2 2z" fill="#e58ab5"/></svg>`],
  ["line", `<svg class="w-[32px] h-[30px]" viewBox="0 0 32 30"><path d="M1 7l3-3h27v21l-2 3H3l-2-2z" fill="#fff"/><path d="M2 25h28" stroke="#333"/><rect x="3" y="1" width="26" height="21" rx="3" fill="#3a3a3a" stroke="#eee" stroke-width="1.200"/><path d="M20.500 7c-3-2-8-1.500-8 1s8 2 8 5-5 3.500-9 1.500" fill="none" stroke="#f39237" stroke-width="2.600"/></svg>`],
  ["line", `<svg class="w-[22px] h-[24px] text-[#7b797a]"><use href="#cone"/></svg>`],
  ["active", `<svg class="w-[27px] h-[31px]"><use href="#tv"/></svg>`],
  ["line", `<svg class="w-[29px] h-[29px]" viewBox="0 0 29 29"><rect width="29" height="29" rx="3" fill="#3eb991"/><path d="M5 0h17l-2 8-12 3z" fill="#7fd3df"/><path d="M21 0h6l2 2v13l-7 2-3-9z" fill="#e9b42a"/><path d="M29 15v12l-2 2h-7l1-8 2-5z" fill="#c8103f"/><path d="M0 24l8-3 4 8H2l-2-2z" fill="#4b1742"/><path d="M8 22l13-2 2 9H11z" fill="#e01563"/><path d="M7 9l13-3 4 13-13 4z" fill="#fff"/><path d="M18.500 11c-2-2-6-1-5.500 1s5.500 1 5.500 3.500-4.500 2.500-6 .5" fill="none" stroke="#4b1742" stroke-width="2.300"/></svg>`],
  ["line", `<svg class="w-[27px] h-[27px]" viewBox="0 0 27 27"><rect x=".5" y=".5" width="26" height="26" rx="1" fill="#c53a3a" stroke="#e06a66"/><path d="M6 21L9 6h9M8 13h6M14 11h8l-8 10h8" fill="none" stroke="#fff" stroke-width="2.500"/></svg>`],
  ["line", `<svg class="w-[32px] h-[32px]" viewBox="0 0 32 32"><path d="M15 1h13v12H15zM3 15h13v11H3z" fill="#d5d5d5" stroke="#111"/><path d="M17 3h9v7h-9zM5 17h9v6H5z" fill="#1010e0" stroke="#000"/><path d="M15 13h15l1 3H16zM2 27h17l1 4H1z" fill="#eee" stroke="#111"/><path d="M23 5l-9 8 5 1-10 9" fill="none" stroke="#f2e600" stroke-width="2.800"/></svg>`]
];
document.getElementById("dock").innerHTML = apps.map(([k,icon]) => {
  const frame = k === "line" ? `<path d="M.5 0v40.500H34L43.500 31V0" fill="none" stroke="#00a2ff"/>`
    : k === "active" ? `<path d="M.5.500h43V31L34 40.500H.5z" fill="none" stroke="#fff"/><path d="M47.500 0v31L38 40.500M51.500 0v31L42 40.500" fill="none" stroke="#00a2ff"/>` : "";
  return `<div class="relative w-[60px] h-[41px] shrink-0"><svg class="absolute left-0 top-0 w-[60px] h-[41px]" viewBox="0 0 60 41">${frame}<path d="M0 40.500h60" stroke="#00a2ff"/></svg><div class="relative w-[44px] h-[41px] flex items-center justify-center">${icon}</div></div>`;
}).join("");
</script>
</body>
</html>
